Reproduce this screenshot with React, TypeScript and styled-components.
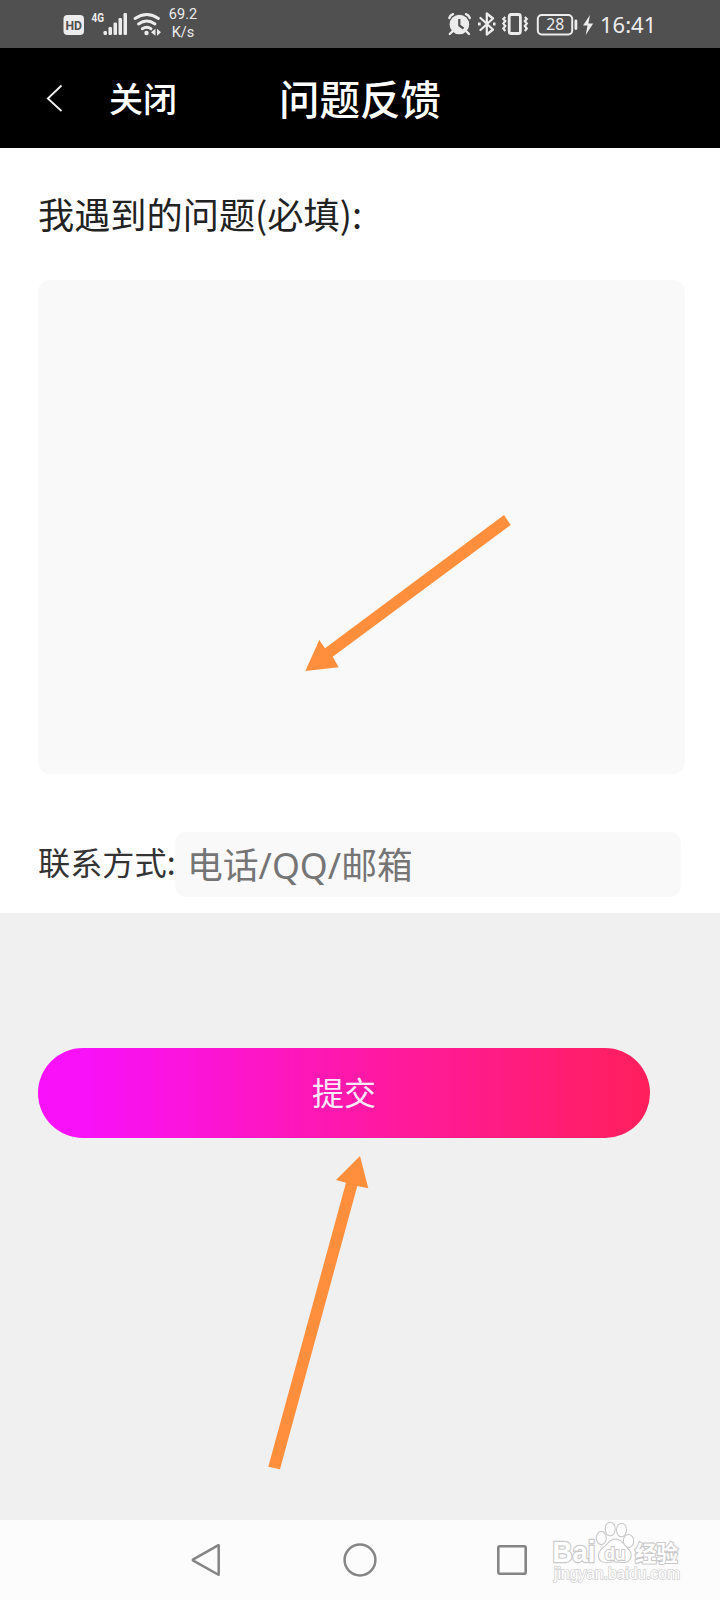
import React from 'react';
import styled, { createGlobalStyle } from 'styled-components';

const GlobalStyle = createGlobalStyle`
  * { box-sizing: border-box; }
  body { margin: 0; background: #f0f0f0; }
`;

const Screen = styled.div`
  position: relative;
  display: flex;
  flex-direction: column;
  width: 720px;
  height: 1600px;
  overflow: hidden;
  background: #f0f0f0;
  font-family: 'Noto Sans', 'Noto Sans CJK SC', sans-serif;
`;

const StatusBar = styled.div`
  display: flex;
  justify-content: space-between;
  height: 48px;
  padding: 0 64px 0 63px;
  background: #505050;
  color: #ececec;
`;

const StatusGroup = styled.div`
  display: flex;
  height: 48px;
`;

const NetSpeed = styled.div`
  display: flex;
  flex-direction: column;
  width: 32px;
  margin-left: 2px;
  padding-top: 6px;
  align-items: center;
  font: 14.5px/18px Roboto, sans-serif;
`;

const Clock = styled.div`
  width: 56px;
  margin-left: 5px;
  font: 22px/48px 'Noto Sans', sans-serif;
  white-space: nowrap;
`;

const Header = styled.header`
  display: flex;
  align-items: center;
  height: 100px;
  padding-left: 46px;
  background: #000;
  color: #fff;
  font-family: KaiTi, STKaiti, 'Noto Sans CJK SC', sans-serif;
  font-weight: 500;
`;

const CloseLabel = styled.span`
  width: 68px;
  margin-left: 45px;
  font-size: 34px;
  line-height: 50px;
`;

const Title = styled.h1`
  margin: 0 0 0 102px;
  font-size: 40.5px;
  font-weight: 500;
  line-height: 60px;
`;

const Form = styled.section`
  display: flex;
  flex-direction: column;
  height: 765px;
  padding: 39px 35px 0 38px;
  background: #fff;
`;

const ProblemLabel = styled.label`
  height: 93px;
  color: #222;
  font: 36.2px/52px 'Noto Sans CJK SC', sans-serif;
`;

const ProblemBox = styled.textarea`
  display: block;
  width: 647px;
  height: 494px;
  padding: 12px;
  border: 0;
  border-radius: 12px;
  background: #f9f9f9;
  resize: none;
  outline: none;
`;

const ContactRow = styled.div`
  display: flex;
  margin-top: 58px;
  height: 65px;
`;

const ContactLabel = styled.label`
  width: 137px;
  color: #333;
  font: 32.2px/58px 'Noto Sans CJK SC', sans-serif;
  white-space: nowrap;
`;

const ContactInput = styled.input`
  width: 506px;
  height: 65px;
  padding: 0 12px;
  border: 0;
  border-radius: 11px;
  background: #f9f9f9;
  outline: none;
  font: 35.8px 'Noto Sans', 'Noto Sans CJK SC', sans-serif;
  &::placeholder { color: #757575; opacity: 1; }
`;

const Actions = styled.section`
  flex: 1;
  padding: 135px 38px 0;
`;

const SubmitButton = styled.button`
  display: block;
  width: 612px;
  height: 90px;
  padding: 0 0 4px;
  border: 0;
  border-radius: 45px;
  background: linear-gradient(90deg, #f911fb 0%, #f911f8 8%, #ff1a9b 60%, #ff1f5c 100%);
  color: #fbe9fb;
  font: 32px/86px 'Noto Sans CJK SC', sans-serif;
`;

const NavBar = styled.nav`
  display: flex;
  align-items: center;
  justify-content: space-between;
  height: 80px;
  padding: 0 191px 0 190px;
  background: #fcfcfc;
`;

const HomeIcon = styled.svg`
  margin-left: 4px;
`;

const Annotations = styled.svg`
  position: absolute;
  inset: 0;
  pointer-events: none;
`;

const Watermark = styled.svg`
  position: absolute;
  left: 545px;
  top: 1515px;
  text { paint-order: stroke; }
`;

const SignalIcons = () => (
  <svg width="102" height="48" viewBox="63.5 0 102 48" fill="#ececec">
    <rect x="64" y="15" width="20.5" height="20" rx="4" />
    <text x="66" y="30" fontFamily="Roboto, sans-serif" fontSize="13.5" fontWeight="700" fill="#505050" textLength="16.5" lengthAdjust="spacingAndGlyphs">HD</text>
    <text x="92" y="22.3" fontFamily="Roboto, sans-serif" fontSize="12.5" fontWeight="700" textLength="12.5" lengthAdjust="spacingAndGlyphs">4G</text>
    <rect x="104" y="31" width="3.5" height="4" rx="1.2" />
    <rect x="109" y="27" width="3.5" height="8" rx="1.2" />
    <rect x="114" y="22.5" width="3.5" height="12.5" rx="1.2" />
    <rect x="119" y="18" width="3.5" height="17" rx="1.2" />
    <rect x="124" y="13" width="3.5" height="22" rx="1.2" />
    <g fill="none" stroke="#ececec" strokeWidth="2.9" strokeLinecap="round">
      <path d="M135.5 18.5Q147.3 10.5 159 18.5" />
      <path d="M139 24Q147.3 18 155.5 24" />
      <path d="M142.8 28.8Q147.3 25.8 151.5 28.8" />
    </g>
    <circle cx="147" cy="33" r="2.2" />
    <path d="M151.5 32.3l4.5-3.5v7zM157.5 28.8l4 3.5-4 3.5z" />
  </svg>
);

const DeviceIcons = () => (
  <svg width="149" height="48" viewBox="446 0 149 48" fill="none" stroke="#ececec">
    <circle cx="459.4" cy="24.5" r="9.8" fill="#ececec" stroke="none" />
    <path d="M449.3 18Q450 15.3 453 14.2M469.8 18Q469 15.3 466 14.2M452.8 31l-3 3M466 31l3 3" strokeWidth="2.4" strokeLinecap="round" />
    <path d="M459.3 19v6.5l4.2 3" stroke="#505050" strokeWidth="2.2" />
    <path d="M480.5 18l12.5 11.5-6.2 5V13.5l6.2 5L480.5 30" strokeWidth="2.3" strokeLinejoin="round" strokeLinecap="round" />
    <path d="M478 24h2.7M493 24h2.5" strokeWidth="3" />
    <rect x="509.2" y="14.5" width="11.2" height="19" rx="2" strokeWidth="2.8" />
    <path d="M505.3 17l-2 2 2 2-2 2.5 2 2.5-2 2.5 2 2.5M524.8 17l2 2-2 2 2 2.5-2 2.5 2 2.5-2 2.5" strokeWidth="2.2" />
    <rect x="537.8" y="15" width="34.4" height="19.5" rx="4" strokeWidth="2" />
    <rect x="574.5" y="19.5" width="2.8" height="10.5" rx="1.4" fill="#ececec" stroke="none" />
    <text x="546.2" y="30.3" fontFamily="'Noto Sans', sans-serif" fontSize="17" fill="#ececec" stroke="none" textLength="18" lengthAdjust="spacingAndGlyphs">28</text>
    <path d="M590 15l-7 10.5h4.5L585.7 35l7.5-11.5h-4.8z" fill="#ececec" stroke="none" />
  </svg>
);

const BackChevron = () => (
  <svg width="18" height="32" viewBox="0 0 18 32" fill="none" stroke="#f2f2f2" strokeWidth="1.8">
    <path d="M15.5 3.5L1.8 16.5l13.7 12.5" />
  </svg>
);

const App = () => (
  <>
    <GlobalStyle />
    <Screen>
      <StatusBar>
        <StatusGroup>
          <SignalIcons />
          <NetSpeed><span>69.2</span><span>K/s</span></NetSpeed>
        </StatusGroup>
        <StatusGroup>
          <DeviceIcons />
          <Clock>16:41</Clock>
        </StatusGroup>
      </StatusBar>
      <Header>
        <BackChevron />
        <CloseLabel>关闭</CloseLabel>
        <Title>问题反馈</Title>
      </Header>
      <Form>
        <ProblemLabel htmlFor="problem">我遇到的问题(必填):</ProblemLabel>
        <ProblemBox id="problem" />
        <ContactRow>
          <ContactLabel htmlFor="contact">联系方式:</ContactLabel>
          <ContactInput id="contact" placeholder="电话/QQ/邮箱" />
        </ContactRow>
      </Form>
      <Actions>
        <SubmitButton type="button">提交</SubmitButton>
      </Actions>
      <NavBar>
        <svg width="32" height="36" viewBox="0 0 32 36" fill="none" stroke="#858585" strokeWidth="2.5" strokeLinejoin="round">
          <path d="M28.7 3.5v29Q28.7 33 28 32.5L3.3 18.7Q2.3 18 3.3 17.3L28 3.3Q28.7 3 28.7 3.5z" />
        </svg>
        <HomeIcon width="36" height="36" viewBox="0 0 36 36" fill="none" stroke="#858585" strokeWidth="2.5">
          <circle cx="18" cy="18" r="15.4" />
        </HomeIcon>
        <svg width="36" height="36" viewBox="0 0 36 36" fill="none" stroke="#858585" strokeWidth="2.6">
          <rect x="5.3" y="4.3" width="27.4" height="27.4" rx="1.5" />
        </svg>
      </NavBar>
      <Annotations width="720" height="1600" fill="#ff8f3c">
        <path d="M305.3 671L319.3 640L325 648.3L504 515L510.7 525L332.7 656.7L338.7 667.3Z" />
        <path d="M360 1156L368.3 1188.3L357.3 1186L280 1469.3L268.3 1466.7L346 1182.7L336 1180Z" />
      </Annotations>
      <Watermark width="145" height="75" viewBox="545 1515 145 75" fill="#fff" stroke="#cacaca" strokeWidth="1.1">
        <g fontFamily="'Liberation Sans', sans-serif" fontWeight="700">
          <text x="552.5" y="1562" fontSize="29" strokeWidth="2.4" textLength="43" lengthAdjust="spacingAndGlyphs">Bai</text>
          <ellipse cx="601.3" cy="1538" rx="5" ry="6.6" />
          <ellipse cx="610.2" cy="1529" rx="5" ry="6.8" />
          <ellipse cx="621.5" cy="1530" rx="5" ry="6.8" />
          <ellipse cx="628.5" cy="1541" rx="5.2" ry="6.5" />
          <path d="M616 1539C622 1539 625 1546 628 1549C633 1553 632 1562 624 1562.5C618 1563 615 1561 611 1562C605 1564 598 1562 598.5 1555C599 1549 605 1547 608 1543Q611 1539 616 1539Z" />
          <text x="604.5" y="1559.5" fontSize="18.5" strokeWidth="2" textLength="21" lengthAdjust="spacingAndGlyphs">du</text>
          <text x="635" y="1561" fontFamily="'Noto Sans CJK SC', sans-serif" fontSize="22" strokeWidth="2.2" textLength="43" lengthAdjust="spacingAndGlyphs">经验</text>
        </g>
        <text x="554" y="1579" fontFamily="'Liberation Sans', sans-serif" fontSize="16" strokeWidth="1.6" stroke="#d4d4d4" textLength="126" lengthAdjust="spacingAndGlyphs">jingyan.baidu.com</text>
      </Watermark>
    </Screen>
  </>
);

export default App;
